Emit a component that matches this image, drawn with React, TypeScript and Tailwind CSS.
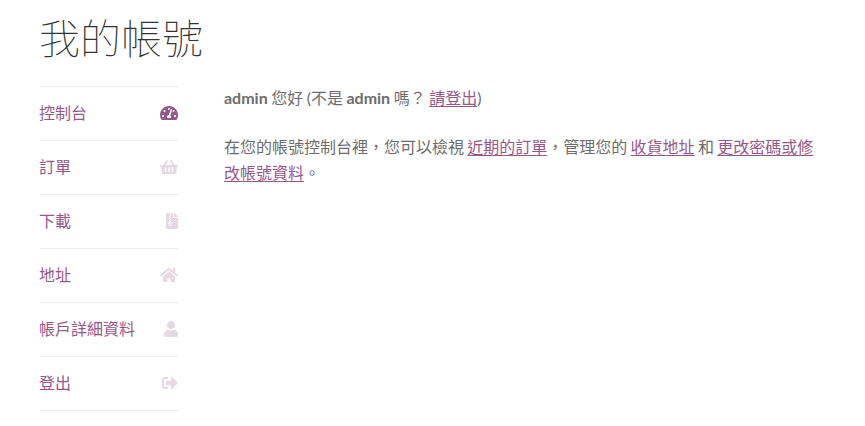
import { FaFileArchive, FaHome, FaShoppingBasket, FaSignOutAlt, FaTachometerAlt, FaUser } from 'react-icons/fa';

const navItems = [
  { label: '控制台', Icon: FaTachometerAlt, active: true, size: 'h-[18px] w-[18px]' },
  { label: '訂單', Icon: FaShoppingBasket, active: false, size: 'h-[18px] w-[18px]' },
  { label: '下載', Icon: FaFileArchive, active: false, size: 'h-4 w-3' },
  { label: '地址', Icon: FaHome, active: false, size: 'h-[18px] w-[18px]' },
  { label: '帳戶詳細資料', Icon: FaUser, active: false, size: 'h-4 w-3.5' },
  { label: '登出', Icon: FaSignOutAlt, active: false, size: 'h-4 w-4' },
];

function TextLink({ children }: { children: React.ReactNode }) {
  return (
    <a href="#" className="text-[#96588a] underline underline-offset-2">
      {children}
    </a>
  );
}

export default function App() {
  return (
    <div className="h-[426px] w-[865px] overflow-hidden bg-white px-10 text-[#6d6d6d] font-['Lato','Noto_Sans_CJK_TC',sans-serif]">
      <h1 className="-ml-px pt-[13px] text-[41px] leading-[52px] font-thin text-[#333333]">我的帳號</h1>
      <div className="mt-[21px] flex gap-[46px]">
        <nav className="w-[138px] shrink-0 border-t border-[#eeeeee]">
          {navItems.map(({ label, Icon, active, size }) => (
            <a
              key={label}
              href="#"
              className="flex h-[54px] items-center justify-between border-b border-[#eeeeee] text-[16px] text-[#96588a]"
            >
              <span className="-mt-[2px] -ml-px">{label}</span>
              <Icon className={`-mt-px shrink-0 ${size} ${active ? 'text-[#96588a]' : 'text-[#e6d9e4]'}`} />
            </a>
          ))}
        </nav>
        <div className="w-[601px] text-[16px] leading-[26px]">
          <p className="-mt-px [word-spacing:-0.6px]">
            <strong className="font-bold">admin</strong> 您好 (不是 <strong className="font-bold">admin</strong> 嗎？{' '}
            <TextLink>請登出</TextLink>)
          </p>
          <p className="mt-[23px] [word-spacing:-0.8px]">
            在您的帳號控制台裡，您可以檢視 <TextLink>近期的訂單</TextLink>，管理您的 <TextLink>收貨地址</TextLink> 和{' '}
            <TextLink>更改密碼或修改帳號資料</TextLink>。
          </p>
        </div>
      </div>
    </div>
  );
}
